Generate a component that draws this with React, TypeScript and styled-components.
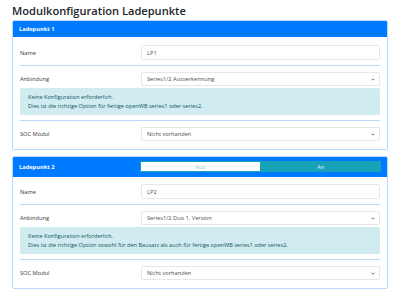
import styled, { createGlobalStyle } from "styled-components";

const GlobalStyle = createGlobalStyle`
  html, body {
    margin: 0;
    padding: 0;
    background: #ffffff;
    font-family: "Open Sans", "Noto Sans", sans-serif;
    color: #212529;
  }
`;

const Page = styled.div`
  padding: 0 12px;
  width: 376px;
`;

const Title = styled.h1`
  margin: 0;
  height: 20px;
  font-size: 11.1px;
  font-weight: 600;
  line-height: 22px;
  color: #212529;
`;

const Card = styled.section`
  border: 1px solid #b8d8fc;
  border-radius: 2px;
  margin-bottom: 6px;
  overflow: hidden;
`;

const CardHeader = styled.header<{ $tall?: boolean }>`
  background: #007bff;
  color: #ffffff;
  display: grid;
  grid-template-columns: 121px 1fr;
  align-items: center;
  height: ${({ $tall }) => ($tall ? "21px" : "17px")};
  padding: 0 7px;
  margin: -1px -1px 0;
  font-size: 5.7px;
  font-weight: 700;
`;

const CardBody = styled.div<{ $tight?: boolean }>`
  padding: ${({ $tight }) => ($tight ? "7px" : "8px")} 7px 8px;
`;

const Row = styled.div`
  display: grid;
  grid-template-columns: 121px 1fr;
  align-items: center;
`;

const Label = styled.label`
  font-size: 5.7px;
  color: #343a40;
`;

const Field = styled.div<{ $h?: number }>`
  height: ${({ $h }) => $h ?? 14}px;
  box-sizing: border-box;
  border: 1px solid #e6e6e6;
  border-radius: 1.5px;
  display: flex;
  align-items: center;
  justify-content: space-between;
  padding: 0 4px 0 5px;
  font-size: 5.7px;
  color: #495057;
`;

const Divider = styled.hr`
  border: 0;
  border-top: 1px solid #b8d8fc;
  margin: 5px 0 6px;
`;

const Alert = styled.div`
  margin-top: 2px;
  background: #d1ecf1;
  border-radius: 2px;
  padding: 5px 8px;
  height: 27px;
  box-sizing: border-box;
  font-size: 5.6px;
  line-height: 8.5px;
  color: #0c5460;
`;

const Toggle = styled.div`
  display: grid;
  grid-template-columns: 1fr 1fr;
  height: 11px;
`;

const ToggleButton = styled.div<{ $active?: boolean }>`
  display: flex;
  align-items: center;
  justify-content: center;
  font-size: 5.6px;
  font-weight: 400;
  background: ${({ $active }) => ($active ? "#17a2b8" : "#ffffff")};
  color: ${({ $active }) => ($active ? "#e8f6f8" : "#7fc6d2")};
  border: 1px solid #17a2b8;
  box-sizing: border-box;
`;

const Chevron = () => (
  <svg width="4" height="3" viewBox="0 0 4 3">
    <path d="M0.5 0.7 L2 2.2 L3.5 0.7" fill="none" stroke="#555" strokeWidth="0.8" />
  </svg>
);

type Point = {
  title: string;
  name: string;
  connection: string;
  info: string;
  toggle?: boolean;
};

const points: Point[] = [
  {
    title: "Ladepunkt 1",
    name: "LP1",
    connection: "Series1/2 Autoerkennung",
    info: "Dies ist die richtige Option für fertige openWB series1 oder series2.",
  },
  {
    title: "Ladepunkt 2",
    name: "LP2",
    connection: "Series1/2 Duo 1. Version",
    info: "Dies ist die richtige Option sowohl für den Bausatz als auch für fertige openWB series1 oder series2.",
    toggle: true,
  },
];

const App = () => (
  <Page>
    <GlobalStyle />
    <Title>Modulkonfiguration Ladepunkte</Title>
    {points.map((p) => (
      <Card key={p.title}>
        <CardHeader $tall={p.toggle}>
          <span>{p.title}</span>
          {p.toggle && (
            <Toggle>
              <ToggleButton>Aus</ToggleButton>
              <ToggleButton $active>An</ToggleButton>
            </Toggle>
          )}
        </CardHeader>
        <CardBody $tight={p.toggle}>
          <Row>
            <Label>Name</Label>
            <Field $h={15}>{p.name}</Field>
          </Row>
          <Divider />
          <Row>
            <Label>Anbindung</Label>
            <Field>
              {p.connection}
              <Chevron />
            </Field>
          </Row>
          <Alert>
            Keine Konfiguration erforderlich.
            <br />
            {p.info}
          </Alert>
          <Divider />
          <Row>
            <Label>SOC Modul</Label>
            <Field>
              Nicht vorhanden
              <Chevron />
            </Field>
          </Row>
        </CardBody>
      </Card>
    ))}
  </Page>
);

export default App;
